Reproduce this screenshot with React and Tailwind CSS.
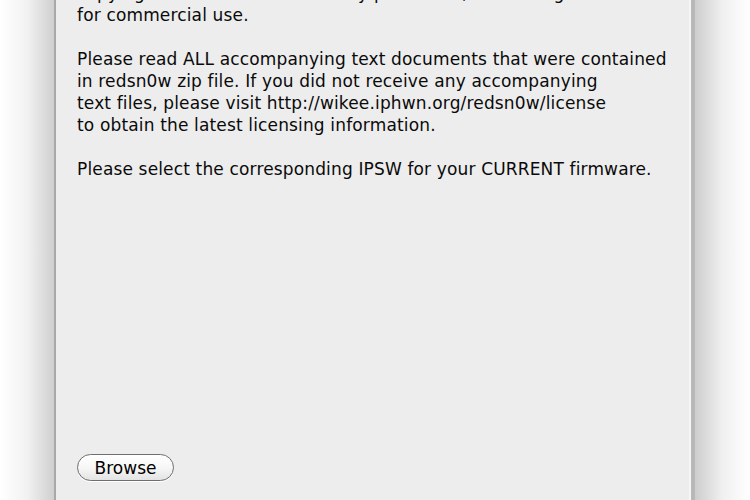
import React from 'react';

const lines = [
  'copying of this software is strictly prohibited, as is using it',
  'for commercial use.',
  '',
  'Please read ALL accompanying text documents that were contained',
  'in redsn0w zip file. If you did not receive any accompanying',
  'text files, please visit http://wikee.iphwn.org/redsn0w/license',
  'to obtain the latest licensing information.',
  '',
  'Please select the corresponding IPSW for your CURRENT firmware.',
];

export default function App() {
  return (
    <div className="w-[750px] h-[500px] overflow-hidden flex bg-white" style={{ fontFamily: '"DejaVu Sans", sans-serif' }}>
      <div className="w-[54px] h-full bg-gradient-to-r from-white via-[#f2f2f2] to-[#cfcfcf]" />
      <div className="w-[2px] h-full bg-[#a8a8a8]" />
      <div className="w-[633px] h-full bg-[#ededed] flex flex-col justify-between px-[21px]">
        <div className="-mt-[18px] text-[17px] leading-[22px] text-[#0a0a0a] tracking-[0.15px]">
          {lines.map((l, i) => (
            <div key={i} className="h-[22px] whitespace-pre">{l}</div>
          ))}
        </div>
        <div className="pb-[19px]">
          <button className="w-[97px] h-[27px] rounded-full border border-[#6f6f6f] bg-gradient-to-b from-white via-[#f7f7f7] to-[#e3e3e3] text-[17px] leading-[22px] text-black shadow-[0_1px_0_#ffffff]">
            Browse
          </button>
        </div>
      </div>
      <div className="w-[2px] h-full bg-[#f6f6f6]" />
      <div className="w-[4px] h-full bg-[#b8b8b8]" />
      <div className="flex-1 h-full bg-gradient-to-r from-[#cdcdcd] via-[#f0f0f0] to-white" />
    </div>
  );
}
